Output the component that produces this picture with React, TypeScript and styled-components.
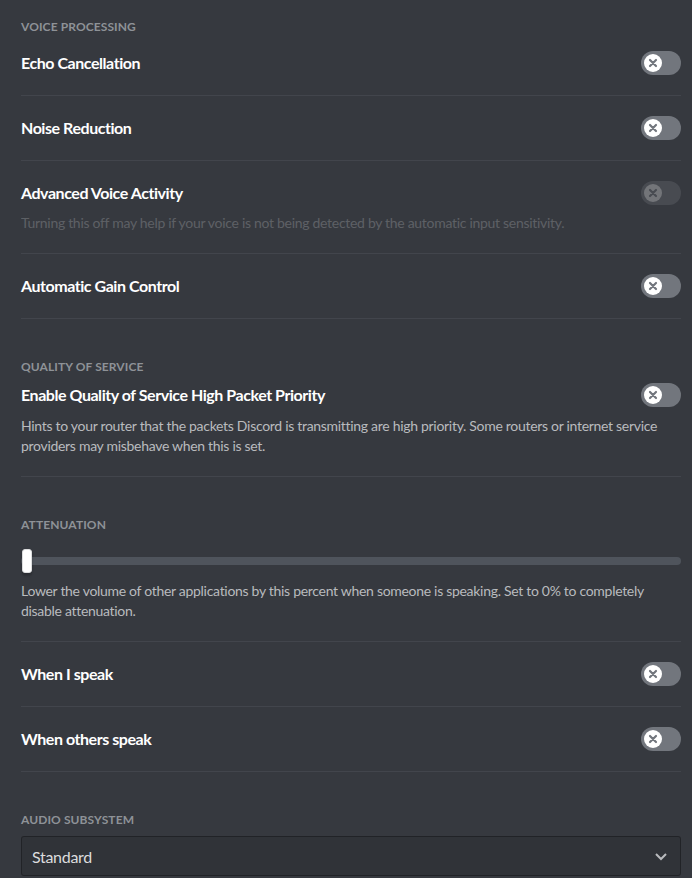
import React from "react";
import styled, { createGlobalStyle } from "styled-components";

const Global = createGlobalStyle`
  html, body { margin: 0; padding: 0; background: #36393f; }
  body { font-family: Lato, "Noto Sans", sans-serif; -webkit-font-smoothing: antialiased; }
  * { box-sizing: border-box; }
`;

const Page = styled.div`
  background: #36393f;
  min-height: 878px;
  padding: 19px 11px 0 21px;
  display: flex;
  flex-direction: column;
`;

const Header = styled.h5<{ $gap?: number }>`
  margin: 0 0 ${(p) => p.$gap ?? 8}px 0;
  font-size: 12px;
  line-height: 16px;
  font-weight: 700;
  text-transform: uppercase;
  color: #8e9297;
  letter-spacing: 0.1px;
`;

const Item = styled.div`
  display: flex;
  flex-direction: column;
`;

const Row = styled.div`
  display: flex;
  align-items: center;
  justify-content: space-between;
  height: 24px;
`;

const Title = styled.div`
  font-size: 16px;
  line-height: 24px;
  font-weight: 700;
  color: #ffffff;
  letter-spacing: -0.45px;
`;

const Desc = styled.div<{ $disabled?: boolean; $mt?: number }>`
  margin-top: ${(p) => p.$mt ?? 8}px;
  font-size: 14px;
  line-height: 20px;
  color: #b9bbbe;
  letter-spacing: -0.3px;
  opacity: ${(p) => (p.$disabled ? 0.3 : 1)};
  padding-right: 20px;
`;

const Divider = styled.div<{ $mb?: number }>`
  height: 1px;
  background: rgba(79, 84, 92, 0.48);
  margin-top: 20px;
  margin-bottom: ${(p) => p.$mb ?? 20}px;
`;

const Track = styled.div<{ $disabled?: boolean }>`
  width: 40px;
  height: 24px;
  border-radius: 14px;
  background: #72767d;
  position: relative;
  flex-shrink: 0;
  opacity: ${(p) => (p.$disabled ? 0.3 : 1)};
`;

const Knob = styled.div`
  position: absolute;
  left: 3px;
  top: 3px;
  width: 18px;
  height: 18px;
  border-radius: 50%;
  background: #ffffff;
  display: flex;
  align-items: center;
  justify-content: center;
`;

const Toggle = ({ disabled }: { disabled?: boolean }) => (
  <Track $disabled={disabled}>
    <Knob>
      <svg width="10" height="10" viewBox="0 0 10 10">
        <path d="M2 2 L8 8 M8 2 L2 8" stroke="#72767d" strokeWidth="2.2" strokeLinecap="round" />
      </svg>
    </Knob>
  </Track>
);

const SliderWrap = styled.div`
  position: relative;
  height: 24px;
  margin-top: 16px;
  display: flex;
  align-items: center;
`;

const SliderBar = styled.div`
  flex: 1;
  height: 8px;
  border-radius: 4px;
  background: #4f545c;
`;

const SliderGrabber = styled.div`
  position: absolute;
  left: 1px;
  top: 0;
  width: 10px;
  height: 24px;
  border-radius: 3px;
  background: #ffffff;
  border: 1px solid #dcddde;
  box-shadow: 0 3px 1px 0 rgba(0, 0, 0, 0.05), 0 2px 2px 0 rgba(0, 0, 0, 0.1), 0 3px 3px 0 rgba(0, 0, 0, 0.05);
`;

const Select = styled.div`
  margin-top: 8px;
  height: 40px;
  border: 1px solid rgba(0, 0, 0, 0.3);
  border-radius: 3px;
  background: rgba(0, 0, 0, 0.1);
  display: flex;
  align-items: center;
  justify-content: space-between;
  padding: 0 12px 0 10px;
  color: #dcddde;
  font-size: 16px;
  letter-spacing: -0.3px;
`;

type Sw = { title: string; desc?: string; disabled?: boolean; mb?: number; descMt?: number };

const SwitchItem = ({ title, desc, disabled, mb, descMt }: Sw) => (
  <Item>
    <Row>
      <Title>{title}</Title>
      <Toggle disabled={disabled} />
    </Row>
    {desc && (
      <Desc $disabled={disabled} $mt={descMt}>
        {desc}
      </Desc>
    )}
    <Divider $mb={mb} />
  </Item>
);

export default function App() {
  return (
    <>
      <Global />
      <Page>
        <Header $gap={16}>Voice Processing</Header>
        <SwitchItem title="Echo Cancellation" />
        <SwitchItem title="Noise Reduction" />
        <SwitchItem
          title="Advanced Voice Activity"
          desc="Turning this off may help if your voice is not being detected by the automatic input sensitivity."
          disabled
        />
        <SwitchItem title="Automatic Gain Control" mb={40} />

        <Header>Quality of Service</Header>
        <SwitchItem
          title="Enable Quality of Service High Packet Priority"
          desc="Hints to your router that the packets Discord is transmitting are high priority. Some routers or internet service providers may misbehave when this is set."
          descMt={9}
          mb={40}
        />

        <Header $gap={0}>Attenuation</Header>
        <SliderWrap>
          <SliderBar />
          <SliderGrabber />
        </SliderWrap>
        <Desc $mt={8}>
          Lower the volume of other applications by this percent when someone is speaking. Set to 0% to completely disable attenuation.
        </Desc>
        <Divider />
        <SwitchItem title="When I speak" />
        <SwitchItem title="When others speak" mb={40} />

        <Header $gap={0}>Audio Subsystem</Header>
        <Select>
          <span>Standard</span>
          <svg width="14" height="10" viewBox="0 0 14 10">
            <path d="M2 3 L7 8 L12 3" stroke="#b9bbbe" strokeWidth="2" fill="none" />
          </svg>
        </Select>
      </Page>
    </>
  );
}
